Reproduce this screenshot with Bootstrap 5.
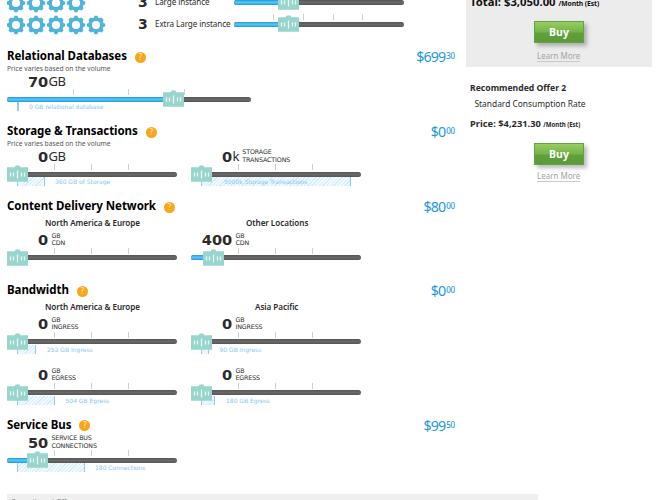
<!DOCTYPE html>
<html lang="en">
<head>
<meta charset="utf-8">
<meta name="viewport" content="width=device-width, initial-scale=1">
<title>Pricing calculator</title>
<link href="https://cdn.jsdelivr.net/npm/bootstrap@5.3.0/dist/css/bootstrap.min.css" rel="stylesheet">
<style>
body{font-family:"Noto Sans","Open Sans",sans-serif;color:#2b2b2b;background:#fff;font-size:9px;line-height:1}
.page{width:657px;height:500px}
.upper{height:494px}
.calc{width:448px;margin-left:7px}
.offers{width:186px;margin-left:10.5px}
.instances{height:46px}
.instances .line{height:22px}
#large{margin-top:-7px}
.gears{width:131px;height:20px}
.gears svg{width:20px;height:20px;margin-left:-1px;margin-right:1px}
.count{font:bold 14px/18px "DejaVu Sans",sans-serif;width:17px}
.iname{width:79px;font-size:8.1px;line-height:18px;letter-spacing:-.08px}
.inst{width:170px;height:18px;padding-top:.4px}
.group{height:75px}
.group-cdn{height:84px}
.group-band{height:134px}
.group-bus{height:80px}
.heading{height:20px}
.heading h2{font-size:11.5px;font-weight:700;color:#000;line-height:20px;letter-spacing:-.05px;margin:0}
.help{width:11px;height:11px;border-radius:50%;background:#fba51b;color:#ffe9c4;font:8px/11px "DejaVu Sans",sans-serif;margin-left:8px;margin-top:6px}
.price{color:#1f97dc;font-size:14.3px;letter-spacing:-.85px;line-height:20px;padding-top:1px}
.price span{font-size:8px;letter-spacing:-.2px;line-height:18px;font-weight:500;margin-left:.8px}
.group-bus .heading h2{padding-top:1px}
.group-bus .price{padding-top:2px}
.note{height:7px;font-size:6.7px;line-height:5px;color:#555}
.pair{gap:14px}
.region{height:15.5px;font-size:8.1px;font-weight:600;line-height:13px;padding-left:38px;letter-spacing:-.05px}
#other{padding-left:55px}
#asia{padding-left:64px}
.meter{width:170px;height:51px}
.meter.wide{width:244px}
.value{height:17px}
.value b{font:bold 14.6px/17px "DejaVu Sans",sans-serif;width:41px;letter-spacing:-.1px;margin-top:-1px}
.value .big{font-size:13px;line-height:17px;margin-left:.5px;letter-spacing:-.5px;margin-top:-1px}
.value .unit{font:6.3px/7.5px "DejaVu Sans",sans-serif;margin-left:3.4px;margin-top:-2px;letter-spacing:-.1px}
.rail{height:19px;margin-top:4px}
.bar{top:2.5px;left:0;right:0;height:5px;border-radius:3px;background:linear-gradient(#555,#696969 50%,#555)}
.fill{top:2.5px;left:0;height:5px;border-radius:3px 0 0 3px;background:linear-gradient(#199bdc,#5cc8f8 45%,#1d9fe0)}
.tick{top:-5px;width:1px;height:6px;background:#cfcfcf}
.hatch{top:8px;left:10px;height:9px;border:solid #8ccdf5;border-width:0 1px;background:repeating-linear-gradient(135deg,#d3ecfc 0 1px,#f3fafe 1px 2.6px)}
.hint{top:9px;font:6px/8px "DejaVu Sans",sans-serif;color:#86c8f0;white-space:nowrap}
.knob{top:-4px;width:21px;height:17px}
.offer-top{height:67px;background:#ececec}
.btn-buy{--bs-btn-padding-x:0;--bs-btn-padding-y:0;width:50px;height:22px;border:1px solid #62a244;border-radius:0;color:#fff;font-size:10.5px;font-weight:700;line-height:20px;background:linear-gradient(#98cd5f,#73b449 50%,#60a03a 55%,#5b9a38);box-shadow:3px 3px 4px #0004;margin-left:68.5px}
.learn{font-size:8px;line-height:10px;color:#a3a3a3;border-bottom:1px solid #c9c9c9;margin:8px 0 0 71.5px;width:43px}
.est{font-size:6.2px;letter-spacing:-.1px}
.total{font-size:11.3px;line-height:12px;color:#111;margin:-4px 0 0 4.5px;height:25px}
.total .est{font-size:6.8px}
.offer-two .name{font-size:8.65px;line-height:12px;margin:15px 0 0 4.5px}
.offer-two .rate{font-size:8.4px;line-height:12px;margin:3.5px 0 0 9px}
.offer-two .cost{font-size:9.3px;line-height:12px;margin:8.5px 0 0 4.5px;height:25px;letter-spacing:.02px}
.offer-two .learn{margin-top:6px}
.footer-strip{width:531px;height:6px;background:#efefef;color:#777;font-size:7px;line-height:10px;margin-left:7px;padding:3px 0 0 4px}
</style>
</head>
<body>
<svg width="0" height="0" class="position-absolute" aria-hidden="true">
<symbol id="gear" viewBox="-10 -10 20 20"><circle r="5.8" fill="none" stroke="#4fb4d9" stroke-width="3.4"/><g fill="#4fb4d9"><path id="tooth" d="M-2.6-6.5L-1.3-9.2H1.3L2.6-6.5z"/><use href="#tooth" transform="rotate(45)"/><use href="#tooth" transform="rotate(90)"/><use href="#tooth" transform="rotate(135)"/><use href="#tooth" transform="rotate(180)"/><use href="#tooth" transform="rotate(225)"/><use href="#tooth" transform="rotate(270)"/><use href="#tooth" transform="rotate(315)"/></g></symbol>
<symbol id="knob" viewBox="0 0 21 17"><path d="M0 2.3H7.5Q8 .2 10.5 .2T13.5 2.3H21V16.7H0z" fill="#98d6cd"/><path d="M3.5 7.5V11.5M6.5 7.5V11.5M14.5 7.5V11.5M17.5 7.5V11.5M10.5 5.5V13.5" stroke="#effaf8" stroke-width="1.2"/></symbol>
</svg>
<div class="page overflow-hidden d-flex flex-column">
 <div class="upper d-flex">
  <main class="calc">
   <div class="instances overflow-hidden">
    <div class="line d-flex" id="large"></div>
    <div class="line d-flex" id="xlarge"></div>
   </div>
   <section class="group">
    <div class="heading d-flex align-items-start"><h2>Relational Databases</h2><i class="help text-center">?</i><div class="price d-flex align-items-start ms-auto">$699<span>30</span></div></div>
    <div class="note">Price varies based on the volume</div>
    <div class="meter wide" data-value="70" data-big="GB" data-fill="156" data-ticks="66,121,177" data-hatch="1" data-hint="0 GB relational database" data-at="22"></div>
   </section>
   <section class="group">
    <div class="heading d-flex align-items-start"><h2>Storage &amp; Transactions</h2><i class="help text-center">?</i><div class="price d-flex align-items-start ms-auto">$0<span>00</span></div></div>
    <div class="note">Price varies based on the volume</div>
    <div class="d-flex pair">
     <div class="meter" data-value="0" data-big="GB" data-hatch="28" data-hint="360 GB of Storage" data-at="48"></div>
     <div class="meter" data-value="0" data-big="k" data-unit="STORAGE|TRANSACTIONS" data-hatch="150" data-hint="5000k Storage Transactions" data-at="33"></div>
    </div>
   </section>
   <section class="group group-cdn">
    <div class="heading d-flex align-items-start"><h2>Content Delivery Network</h2><i class="help text-center">?</i><div class="price d-flex align-items-start ms-auto">$80<span>00</span></div></div>
    <div class="d-flex pair">
     <div><div class="region">North America &amp; Europe</div><div class="meter" data-value="0" data-unit="GB|CDN"></div></div>
     <div><div class="region" id="other">Other Locations</div><div class="meter" data-value="400" data-unit="GB|CDN" data-fill="12"></div></div>
    </div>
   </section>
   <section class="group group-band">
    <div class="heading d-flex align-items-start"><h2>Bandwidth</h2><i class="help text-center">?</i><div class="price d-flex align-items-start ms-auto">$0<span>00</span></div></div>
    <div class="d-flex pair">
     <div><div class="region">North America &amp; Europe</div><div class="meter" data-value="0" data-unit="GB|INGRESS" data-hatch="19" data-hint="252 GB Ingress" data-at="40"></div><div class="meter" data-value="0" data-unit="GB|EGRESS" data-hatch="38" data-hint="504 GB Egress" data-at="58.5"></div></div>
     <div><div class="region" id="asia">Asia Pacific</div><div class="meter" data-value="0" data-unit="GB|INGRESS" data-hatch="8" data-hint="90 GB Ingress" data-at="28.5"></div><div class="meter" data-value="0" data-unit="GB|EGRESS" data-hatch="14" data-hint="180 GB Egress" data-at="35"></div></div>
    </div>
   </section>
   <section class="group group-bus">
    <div class="heading d-flex align-items-start"><h2>Service Bus</h2><i class="help text-center">?</i><div class="price d-flex align-items-start ms-auto">$99<span>50</span></div></div>
    <div class="meter" data-value="50" data-unit="SERVICE BUS|CONNECTIONS" data-fill="20" data-hatch="68" data-hint="180 Connections" data-at="88"></div>
   </section>
  </main>
  <aside class="offers">
   <div class="offer-top overflow-hidden">
    <div class="total fw-bold text-nowrap">Total: $3,050.00 <span class="est">/Month (Est)</span></div>
    <a class="btn btn-buy d-block" href="#">Buy</a>
    <div class="learn text-nowrap">Learn More</div>
   </div>
   <div class="offer-two overflow-hidden">
    <div class="name fw-bold">Recommended Offer 2</div>
    <div class="rate">Standard Consumption Rate</div>
    <div class="cost fw-bold">Price: $4,231.30 <span class="est">/Month (Est)</span></div>
    <a class="btn btn-buy d-block" href="#">Buy</a>
    <div class="learn text-nowrap">Learn More</div>
   </div>
  </aside>
 </div>
 <div class="footer-strip overflow-hidden">Commitment Offers</div>
</div>
<script src="https://cdn.jsdelivr.net/npm/bootstrap@5.3.0/dist/js/bootstrap.bundle.min.js"></script>
<script>
function rail(fill, ticks, hatch, hint, at) {
  return `<div class="rail position-relative">
    ${ticks.map(t => `<div class="tick position-absolute" style="left:${t}px"></div>`).join('')}
    ${hatch ? `<div class="hatch position-absolute" style="width:${hatch}px"></div>` : ''}
    ${hint ? `<div class="hint position-absolute" style="left:${at}px">${hint}</div>` : ''}
    <div class="bar position-absolute"></div>
    <div class="fill position-absolute" style="width:${fill}px"></div>
    <svg class="knob position-absolute" style="left:${fill}px"><use href="#knob"/></svg>
  </div>`;
}
document.querySelectorAll('.meter').forEach(m => {
  const d = m.dataset;
  const ticks = (d.ticks || '47,84,121').split(',');
  m.innerHTML = `<div class="value d-flex align-items-center"><b class="text-end">${d.value}</b>` +
    (d.big ? `<span class="big">${d.big}</span>` : '') +
    (d.unit ? `<span class="unit">${d.unit.replace('|', '<br>')}</span>` : '') + '</div>' +
    rail(+d.fill || 0, ticks, +d.hatch, d.hint, d.at);
});
[['large', 4, 'Large instance'], ['xlarge', 5, 'Extra Large instance']].forEach(([id, n, name]) => {
  document.getElementById(id).innerHTML =
    `<div class="gears d-flex">${'<svg><use href="#gear"/></svg>'.repeat(n)}</div>` +
    `<div class="count">3</div><div class="iname text-nowrap">${name}</div>` +
    `<div class="inst">${rail(44, [39, 69, 99, 128])}</div>`;
});
</script>
</body>
</html>
